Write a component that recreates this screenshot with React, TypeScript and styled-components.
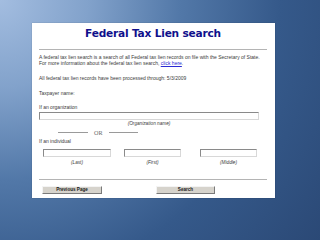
import React from "react";
import styled, { createGlobalStyle } from "styled-components";

const GlobalStyle = createGlobalStyle`
  html, body {
    margin: 0;
    padding: 0;
  }
  body {
    font-family: "Liberation Sans", Arial, sans-serif;
  }
`;

const Slide = styled.div`
  width: 320px;
  height: 240px;
  overflow: hidden;
  background: radial-gradient(
    circle at 0 0,
    #a3bde0 0%,
    #82a2cb 22%,
    #5278a8 45%,
    #35598a 70%,
    #2b4976 100%
  );
  padding: 23px 0 0 32px;
  box-sizing: border-box;
`;

const Panel = styled.section`
  width: 243px;
  height: 175px;
  background: #ffffff;
  box-sizing: border-box;
  padding: 0 8px 0 7px;
  display: flex;
  flex-direction: column;
  box-shadow: 0 0 1px rgba(0, 0, 0, 0.3);
`;

const Title = styled.h1`
  margin: 0;
  height: 20px;
  line-height: 21px;
  text-align: center;
  font-size: 10.6px;
  font-weight: 700;
  color: #10108c;
  font-family: "DejaVu Sans", Verdana, sans-serif;
  letter-spacing: -0.2px;
`;

const Rule = styled.div<{ $top: number }>`
  margin-top: ${(p) => p.$top}px;
  border-top: 1px solid #b4b4b4;
`;

const Text = styled.p<{ $top: number }>`
  margin: ${(p) => p.$top}px 0 0;
  font-size: 5px;
  line-height: 5.6px;
  color: #3a3a3a;
  white-space: nowrap;
`;

const Link = styled.a`
  color: #2a2ad4;
  text-decoration: underline;
`;

const WideInput = styled.div`
  margin-top: 1px;
  height: 8px;
  box-sizing: border-box;
  width: 220px;
  border: 1px solid #8a8a8a;
  border-right-color: #d8d8d8;
  border-bottom-color: #d8d8d8;
`;

const Caption = styled.div`
  margin-top: 1px;
  font-size: 4.7px;
  line-height: 6px;
  font-style: italic;
  color: #3a3a3a;
  text-align: center;
  width: 220px;
`;

const OrRow = styled.div`
  margin-top: 3px;
  padding-left: 19px;
  display: flex;
  align-items: center;
  gap: 6px;
  height: 6px;
`;

const OrLine = styled.span<{ $w: number }>`
  width: ${(p) => p.$w}px;
  border-top: 1px solid #9a9a9a;
`;

const OrText = styled.span`
  font-family: "Liberation Serif", "Times New Roman", serif;
  font-size: 6.2px;
  color: #6a6a6a;
`;

const NameRow = styled.div`
  margin-top: 4px;
  display: flex;
`;

const Field = styled.div<{ $w: number; $ml: number }>`
  width: ${(p) => p.$w}px;
  margin-left: ${(p) => p.$ml}px;
  display: flex;
  flex-direction: column;
  align-items: center;
`;

const Box = styled.div`
  width: 100%;
  height: 8px;
  box-sizing: border-box;
  border: 1px solid #8a8a8a;
  border-right-color: #d8d8d8;
  border-bottom-color: #d8d8d8;
`;

const FieldLabel = styled.span`
  margin-top: 3px;
  font-size: 4.7px;
  line-height: 6px;
  font-style: italic;
  color: #3a3a3a;
`;

const ButtonRow = styled.div`
  margin-top: 6px;
  display: flex;
`;

const Button = styled.button<{ $w: number; $ml: number }>`
  width: ${(p) => p.$w}px;
  margin-left: ${(p) => p.$ml}px;
  height: 8px;
  padding: 0;
  box-sizing: border-box;
  background: #d6d3cc;
  border: 1px solid;
  border-color: #f4f4f4 #7a7a7a #7a7a7a #f4f4f4;
  font-family: "Liberation Sans", Arial, sans-serif;
  font-size: 4.6px;
  font-weight: 700;
  line-height: 6px;
  color: #1a1a1a;
`;

export default function App() {
  return (
    <>
      <GlobalStyle />
      <Slide>
        <Panel>
          <Title>Federal Tax Lien search</Title>
          <Rule $top={6} />
          <Text $top={5}>
            A federal tax lien search is a search of all Federal tax lien records on file with the
            Secretary of State.
            <br />
            For more information about the federal tax lien search, <Link>click here</Link>.
          </Text>
          <Text $top={10}>All federal tax lien records have been processed through: 5/3/2009</Text>
          <Text $top={9}>Taxpayer name:</Text>
          <Text $top={9}>If an organization</Text>
          <WideInput />
          <Caption>(Organization name)</Caption>
          <OrRow>
            <OrLine $w={30} />
            <OrText>OR</OrText>
            <OrLine $w={29} />
          </OrRow>
          <Text $top={3}>If an individual</Text>
          <NameRow>
            <Field $w={68} $ml={4}>
              <Box />
              <FieldLabel>(Last)</FieldLabel>
            </Field>
            <Field $w={57} $ml={13}>
              <Box />
              <FieldLabel>(First)</FieldLabel>
            </Field>
            <Field $w={57} $ml={19}>
              <Box />
              <FieldLabel>(Middle)</FieldLabel>
            </Field>
          </NameRow>
          <Rule $top={13} />
          <ButtonRow>
            <Button $w={60} $ml={3}>Previous Page</Button>
            <Button $w={59} $ml={54}>Search</Button>
          </ButtonRow>
        </Panel>
      </Slide>
    </>
  );
}
